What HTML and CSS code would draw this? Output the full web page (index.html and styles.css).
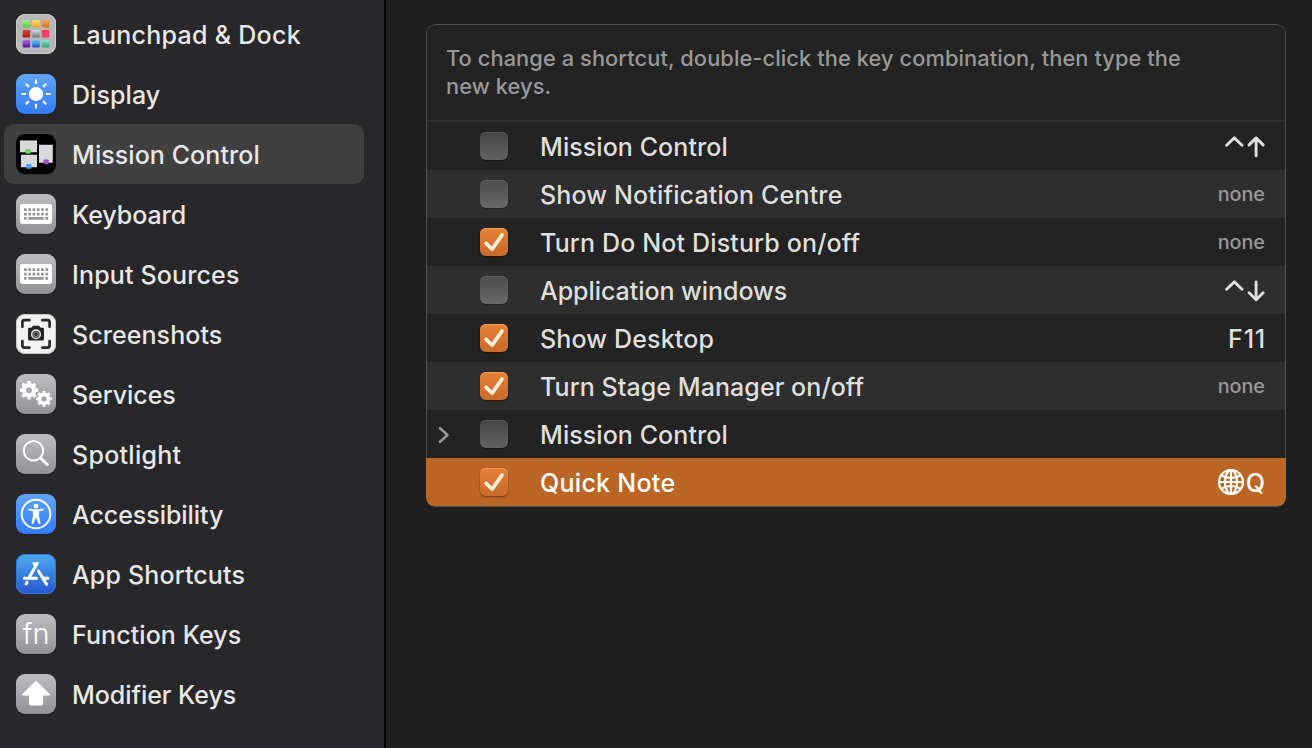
FILE: index.html
```html
<!DOCTYPE html>
<html lang="en">
<head>
<meta charset="utf-8">
<title>Keyboard Shortcuts</title>
<link rel="stylesheet" href="styles.css">
</head>
<body>
<svg class="defs" width="0" height="0" aria-hidden="true">
  <defs>
    <linearGradient id="green" x2="0" y2="1"><stop stop-color="#a5f38b"/><stop offset="1" stop-color="#55c92f"/></linearGradient>
    <linearGradient id="yellow" x2="0" y2="1"><stop stop-color="#fbdc6b"/><stop offset="1" stop-color="#eaa224"/></linearGradient>
    <linearGradient id="orange" x2="0" y2="1"><stop stop-color="#f0a94e"/><stop offset="1" stop-color="#d96f27"/></linearGradient>
    <linearGradient id="red" x2="0" y2="1"><stop stop-color="#e0402f"/><stop offset="1" stop-color="#a51e17"/></linearGradient>
    <linearGradient id="silver" x2="0" y2="1"><stop stop-color="#cfdde2"/><stop offset="1" stop-color="#6b7275"/></linearGradient>
    <linearGradient id="pink" x2="0" y2="1"><stop stop-color="#f23f5c"/><stop offset="1" stop-color="#e44a5e"/></linearGradient>
    <linearGradient id="purple" x2="0" y2="1"><stop stop-color="#b660ee"/><stop offset="1" stop-color="#4f1687"/></linearGradient>
    <linearGradient id="blue" x2="0" y2="1"><stop stop-color="#59cdfa"/><stop offset="1" stop-color="#1c47d2"/></linearGradient>
    <linearGradient id="teal" x2="0" y2="1"><stop stop-color="#80e6cf"/><stop offset="1" stop-color="#419b75"/></linearGradient>
    <symbol id="keyboard" viewBox="0 0 40 40">
      <rect x="4" y="10" width="32" height="20" rx="2.4" fill="#fff"/>
      <g stroke="#97979c" stroke-width="2.7" fill="none">
        <path stroke-dasharray="2.7 1.58" d="M8 15.7h24.2M8 20.1h24.2"/>
        <path d="M8 24.4h2.7M12.3 24.4h15.5M29.4 24.4h2.7"/>
      </g>
    </symbol>
  </defs>
</svg>
<div class="window">
  <nav class="sidebar">
    <div class="item"><svg class="icon launchpad" viewBox="0 0 40 40">
      <rect x="6.6" y="6" width="7.6" height="7.6" rx="1.3" fill="url(#green)"/><rect x="16.2" y="6" width="7.6" height="7.6" rx="1.3" fill="url(#yellow)"/><rect x="25.8" y="6" width="7.6" height="7.6" rx="1.3" fill="url(#orange)"/>
      <rect x="6.6" y="16" width="7.6" height="7.6" rx="1.3" fill="url(#red)"/><rect x="16.2" y="16" width="7.6" height="7.6" rx="1.3" fill="url(#silver)"/><rect x="25.8" y="16" width="7.6" height="7.6" rx="1.3" fill="url(#pink)"/>
      <rect x="6.6" y="26" width="7.6" height="7.6" rx="1.3" fill="url(#purple)"/><rect x="16.2" y="26" width="7.6" height="7.6" rx="1.3" fill="url(#blue)"/><rect x="25.8" y="26" width="7.6" height="7.6" rx="1.3" fill="url(#teal)"/>
    </svg><span class="name wide">Launchpad &amp; Dock</span></div>
    <div class="item"><svg class="icon azure" viewBox="0 0 40 40">
      <circle cx="20" cy="20" r="7.1" fill="#fff"/>
      <path stroke="#fff" stroke-width="2.2" stroke-linecap="round" d="M20 6.4v2.7M20 30.9v2.7M6.4 20h2.7M30.9 20h2.7M10.4 10.4l1.9 1.9M27.7 27.7l1.9 1.9M10.4 29.6l1.9-1.9M27.7 12.3l1.9-1.9"/>
    </svg><span class="name">Display</span></div>
    <div class="item selected"><svg class="icon mission" viewBox="0 0 40 40">
      <path fill="#d8d8da" d="M4 7h17v11.3H4zM23 11.3h13.8v17.4H23zM5 21.3h16v12H5z"/>
      <path stroke="#f1e8f2" d="M4 7h17M23 11.3h13.8M5 21.3h16"/>
      <rect x="9.4" y="15" width="5.4" height="4.8" rx="1" fill="#68d65b"/>
      <rect x="27.5" y="25.5" width="5.2" height="4.8" rx="1" fill="#9a4bd8"/>
      <rect x="10.2" y="30" width="5.2" height="4.8" rx="1" fill="#42a0fa"/>
    </svg><span class="name">Mission Control</span></div>
    <div class="item"><svg class="icon gray"><use href="#keyboard"/></svg><span class="name tight">Keyboard</span></div>
    <div class="item"><svg class="icon gray"><use href="#keyboard"/></svg><span class="name roomy">Input Sources</span></div>
    <div class="item"><svg class="icon white" viewBox="0 0 40 40">
      <path fill="none" stroke="#29292a" stroke-width="2.7" stroke-linecap="round" stroke-linejoin="round" d="M6.4 12.8V8.2q0-2 2-2h5M26.4 6.2h5.2q2 0 2 2v4.6M33.6 27v4.6q0 2-2 2h-5.2M13.4 33.6h-5q-2 0-2-2V27"/>
      <path fill="#252526" d="M13.3 13.8h1.9l1.8-2h6l1.8 2h1.9q1.3 0 1.3 1.3v10.2q0 1.3-1.3 1.3H13.3q-1.3 0-1.3-1.3V15.1q0-1.3 1.3-1.3z"/>
      <circle cx="20" cy="20.3" r="4.3" fill="#343435" stroke="#eee" stroke-width="1.4"/>
      <circle cx="20" cy="20.3" r="2.4" fill="none" stroke="#aaa" stroke-width=".8"/>
    </svg><span class="name">Screenshots</span></div>
    <div class="item"><svg class="icon gray" viewBox="0 0 40 40">
      <g fill="none" stroke="#fff">
        <circle cx="13" cy="16.2" r="5.1" stroke-width="4.2"/>
        <circle cx="13" cy="16.2" r="7.7" pathLength="80" stroke-width="3" stroke-dasharray="5.4 4.6" stroke-dashoffset="2.7"/>
        <circle cx="28" cy="24.8" r="4.4" stroke-width="3.6"/>
        <circle cx="28" cy="24.8" r="6.6" pathLength="80" stroke-width="2.6" stroke-dasharray="5.4 4.6" stroke-dashoffset="2.7"/>
      </g>
    </svg><span class="name tight">Services</span></div>
    <div class="item"><svg class="icon gray" viewBox="0 0 40 40">
      <circle cx="17.5" cy="16.8" r="9.7" fill="none" stroke="#fff" stroke-width="1.9"/><path stroke="#fff" stroke-width="2.9" stroke-linecap="round" d="M25 24.5l6.4 6"/>
    </svg><span class="name wide">Spotlight</span></div>
    <div class="item"><svg class="icon azure" viewBox="0 0 40 40">
      <circle cx="20" cy="20" r="14.3" fill="none" stroke="#fff" stroke-width="1.9"/><circle cx="20" cy="12.2" r="2.4" fill="#fff"/>
      <path fill="#fff" stroke="#fff" stroke-width=".7" stroke-linejoin="round" d="M12.8 14.9l5.4.8h3.6l5.4-.8v1.2l-4.5 1v5.2l1.5 7.1-1.3.3-2.5-6.5h-.8l-2.5 6.5-1.3-.3 1.5-7.1v-5.2l-4.5-1z"/>
    </svg><span class="name tight">Accessibility</span></div>
    <div class="item"><svg class="icon store" viewBox="0 0 40 40">
      <g fill="none" stroke="#fff" stroke-width="3" stroke-linecap="round"><path d="M21.3 9.3L13.5 23M18 9.3l1.6 2.7M22.5 17L30.5 30.3M8.3 24.2h12.2M26.8 24.2h5.2M11 28.4l-.8 1.5"/></g>
    </svg><span class="name roomy">App Shortcuts</span></div>
    <div class="item"><span class="icon gray fn">fn</span><span class="name">Function Keys</span></div>
    <div class="item"><svg class="icon gray" viewBox="0 0 40 40">
      <path fill="#fff" stroke="#fff" stroke-width="1.6" stroke-linejoin="round" d="M20 7.9L33.3 20.8H26.4v8.8q0 1-1 1H14.8q-1 0-1-1v-8.8H6.8z"/>
    </svg><span class="name tight">Modifier Keys</span></div>
  </nav>
  <main class="content">
    <section class="panel">
      <p class="hint">To change a shortcut, double-click the key combination, then type the<br>new keys.</p>
      <div class="row"><span class="lead"></span><span class="box"></span><span class="label">Mission Control</span><svg class="keys" viewBox="0 0 40 24"><path d="M1.6 11.2l7.7-7.3 7.7 7.3M31.1 21.7V3.9M24.1 10.9l7-7 7 7"/></svg></div>
      <div class="row alt"><span class="lead"></span><span class="box"></span><span class="label roomy">Show Notification Centre</span><span class="none">none</span></div>
      <div class="row"><span class="lead"></span><span class="box on"><svg viewBox="0 0 28 28"><path d="M6.1 15.3l6 5.9L22 7"/></svg></span><span class="label roomy">Turn Do Not Disturb on/off</span><span class="none">none</span></div>
      <div class="row alt"><span class="lead"></span><span class="box"></span><span class="label tight">Application windows</span><svg class="keys" viewBox="0 0 40 24"><path d="M1.6 11.2l7.7-7.3 7.7 7.3M31.1 3.9v17.8M24.1 14.7l7 7 7-7"/></svg></div>
      <div class="row"><span class="lead"></span><span class="box on"><svg viewBox="0 0 28 28"><path d="M6.1 15.3l6 5.9L22 7"/></svg></span><span class="label roomy">Show Desktop</span><span class="combo f11">F11</span></div>
      <div class="row alt"><span class="lead"></span><span class="box on"><svg viewBox="0 0 28 28"><path d="M6.1 15.3l6 5.9L22 7"/></svg></span><span class="label">Turn Stage Manager on/off</span><span class="none">none</span></div>
      <div class="row"><span class="lead"><svg class="chevron" viewBox="0 0 12 18"><path d="M2 2.2l7.5 6.8L2 15.8"/></svg></span><span class="box"></span><span class="label">Mission Control</span></div>
      <div class="row active"><span class="lead"></span><span class="box on"><svg viewBox="0 0 28 28"><path d="M6.1 15.3l6 5.9L22 7"/></svg></span><span class="label wide">Quick Note</span><svg class="globe" viewBox="0 0 28 28"><circle cx="14" cy="14" r="12"/><ellipse cx="14" cy="14" rx="6" ry="12"/><path d="M14 2v24M2 14h24M4.6 7.5q9.4 5 18.8 0M4.6 20.5q9.4-5 18.8 0"/></svg><span class="combo">Q</span></div>
    </section>
  </main>
</div>
</body>
</html>
```
FILE: styles.css
```css
* { box-sizing: border-box; }
body {
  margin: 0;
  background: #1f1f1f;
  color: #dfdfdf;
  font-family: Inter, "Liberation Sans", sans-serif;
  font-size: 25px;
  font-weight: 500;
  overflow: hidden;
}
.defs { position: absolute; }
.window { display: flex; height: 748px; }

.sidebar {
  width: 386px;
  flex: none;
  padding: 4px 20px 0 4px;
  border-right: 2px solid #000;
  background: #28282a;
}
.item {
  display: flex;
  align-items: center;
  gap: 16px;
  height: 60px;
  padding: 0 12px;
  border-radius: 10px;
  color: #e7e7e7;
}
.selected { background: #404041; }
.icon {
  width: 40px;
  height: 40px;
  flex: none;
  border-radius: 9px;
  box-shadow: 0 1px 1px rgba(0, 0, 0, .25);
}
.name, .label {
  padding-top: 1px;
  line-height: 32px;
  letter-spacing: .07px;
  white-space: nowrap;
}
.tight { letter-spacing: -.05px; }
.roomy { letter-spacing: .15px; }
.wide { letter-spacing: .28px; }
.gray { background: linear-gradient(#bcbcc1, #929297); }
.azure { background: linear-gradient(#60a5f8, #337bf7); }
.store { background: linear-gradient(#4cabed, #2857d2); box-shadow: inset 0 0 0 1px #2e78cd; }
.launchpad { background: #b7b7b9; box-shadow: inset 0 0 0 1px #cacaca; }
.white { background: #f2f2f3; box-shadow: inset 0 0 0 1px #c9c9c9; }
.mission { background: #000; }
.fn {
  color: #fff;
  font-size: 29px;
  font-weight: 300;
  line-height: 39px;
  text-align: center;
}

.content { flex: 1; padding: 24px 26px 0 40px; }
.panel {
  position: relative;
  height: 483px;
  border-radius: 9px;
  background: #232323;
  overflow: hidden;
}
.panel::after {
  content: "";
  position: absolute;
  inset: 0;
  border: 1px solid rgba(255, 255, 255, .2);
  border-radius: 9px;
  pointer-events: none;
}
.hint {
  margin: 0;
  height: 98px;
  padding: 20px 20px 0;
  border-bottom: 2px solid #2d2d2d;
  color: #989898;
  font-size: 21.8px;
  line-height: 28px;
  letter-spacing: .09px;
  white-space: nowrap;
}
.row { display: flex; align-items: center; height: 48px; padding-right: 21px; }
.alt { background: #2e2e2e; }
.active { position: relative; z-index: 1; background: #bc6626; color: #fff; border-radius: 0 0 8px 8px; }
.lead { width: 54px; padding-left: 12px; }
.chevron { display: block; width: 12px; height: 18px; margin-top: 2px; }
.chevron path { fill: none; stroke: #989898; stroke-width: 2.6; stroke-linecap: round; stroke-linejoin: round; }
.box {
  width: 28px;
  height: 28px;
  margin-right: 32px;
  border-radius: 6px;
  background: linear-gradient(#454545, #626262);
  box-shadow: inset 0 1px 0 rgba(255, 255, 255, .12), 0 1px 1px rgba(0, 0, 0, .35);
}
.alt .box { background: linear-gradient(#4d4d4d, #696969); }
.row .on { background: linear-gradient(#e68136, #c96a27); box-shadow: inset 0 1px 0 #f09a55, 0 1px 2px rgba(0, 0, 0, .45); }
.box svg { display: block; }
.box path { fill: none; stroke: #fdeedd; stroke-width: 3.7; stroke-linecap: round; stroke-linejoin: round; }
.label { flex: 1; }
.none { color: #989898; font-size: 19.8px; }
.combo { padding-top: 2px; }
.f11 { letter-spacing: .8px; margin-right: -1px; }
.keys { width: 40px; height: 24px; }
.keys path { fill: none; stroke: #dfdfdf; stroke-width: 2.9; stroke-linecap: round; stroke-linejoin: round; }
.globe { width: 28px; height: 28px; margin-right: 1px; }
.globe * { fill: none; stroke: #fff; stroke-width: 2.2; }
```
